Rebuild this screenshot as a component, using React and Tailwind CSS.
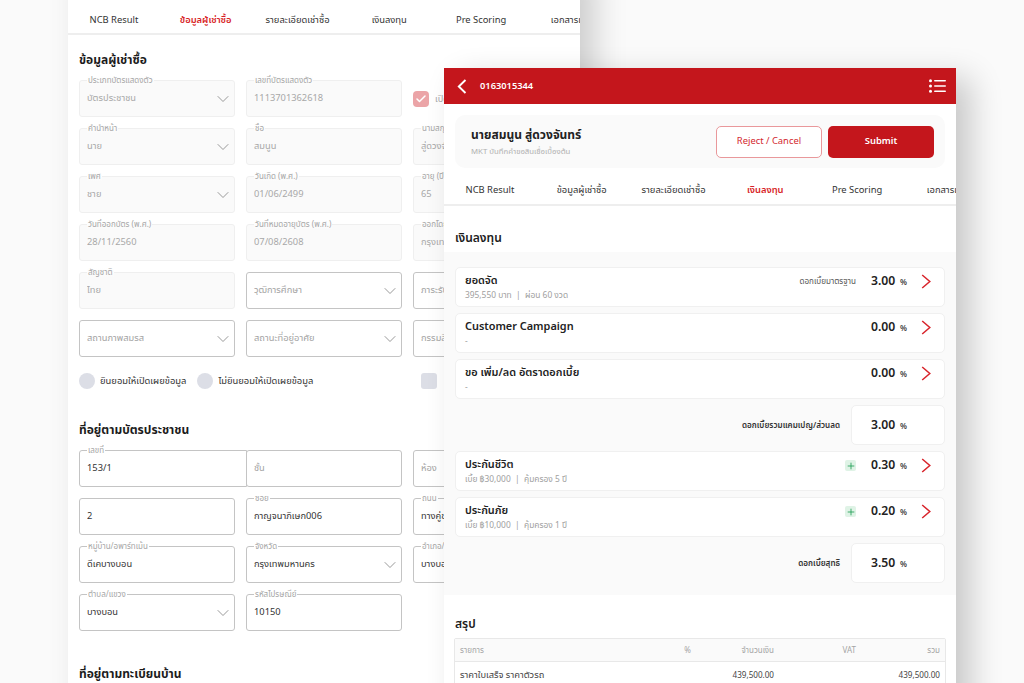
import React from "react";
import { ChevronDown, Check, Plus } from "lucide-react";

const font = { fontFamily: '"Noto Sans", "Noto Sans Thai", "Noto Sans CJK SC", sans-serif' };

const Tabs = ({ active, offset, underline, pad }) => {
  const tabs = ["NCB Result", "ข้อมูลผู้เช่าซื้อ", "รายละเอียดเช่าซื้อ", "เงินลงทุน", "Pre Scoring", "เอกสารแนบ"];
  return (
    <div className={`flex border-b-2 border-[#eeeeee] overflow-hidden ${offset}`}>
      {tabs.map((t) => (
        <div
          key={t}
          className={`w-[91.8px] shrink-0 -mb-[2px] text-center text-[9.4px] leading-[14px] whitespace-nowrap border-b-2 ${
            t === active ? `${underline} text-[#d81f28] font-semibold` : "border-transparent text-[#333]"
          } h-[35px] ${pad}`}
        >
          {t}
        </div>
      ))}
    </div>
  );
};

// form field with the label sitting on the border
const Field = ({ label, value, placeholder, select, disabled, wide }) => (
  <div
    className={`relative h-[37px] rounded-[3px] flex items-center pl-[7px] pr-[1px] ${
      disabled ? "bg-[#fafafa] border border-[#efefef]" : "bg-white border-[1.5px] border-[#c4c4c4]"
    } ${wide ? "-mr-[12px] rounded-r-none" : ""}`}
  >
    {label && (
      <span className={`absolute left-[7px] -top-[6px] px-[1px] text-[8px] leading-[10px] whitespace-nowrap text-[#a6a6a6] ${disabled ? "bg-gradient-to-b from-white to-[#fafafa]" : "bg-white"}`}>
        {label}
      </span>
    )}
    <span className={`flex-1 -mt-[1px] text-[9.3px] whitespace-nowrap overflow-hidden ${disabled ? "text-[#a8a8a8]" : value ? "text-[#333]" : "text-[#a3a3a3]"}`}>
      {value || placeholder}
    </span>
    {select && <ChevronDown size={20} strokeWidth={1.1} className="text-[#8f8f8f]" />}
  </div>
);

const Radio = ({ label }) => (
  <div className="flex items-center gap-[5px] mr-[11px]">
    <span className="w-4 h-4 rounded-full bg-[#dcdee6]" />
    <span className="text-[9.4px] text-[#333] whitespace-nowrap">{label}</span>
  </div>
);

const LeftWindow = () => (
  <div className="absolute left-[68px] top-0 w-[512px] h-[683px] bg-white overflow-hidden">
    <Tabs active="ข้อมูลผู้เช่าซื้อ" underline="border-[#e0313a]" pad="pt-[13px]" />
    <div className="pl-[11px] w-[512px]">
      <h2 className="mt-[15px] h-[20px] text-[12px] leading-[20px] font-bold text-[#1c1c1c]">ข้อมูลผู้เช่าซื้อ</h2>
      <div className="mt-[10px] grid grid-cols-[156px_156px_156px] gap-x-[11px] gap-y-[11px]">
        <Field disabled select label="ประเภทบัตรแสดงตัว" value="บัตรประชาชน" />
        <Field disabled label="เลขที่บัตรแสดงตัว" value="1113701362618" />
        <div className="flex items-center gap-[6px] h-[37px]">
          <span className="w-4 h-4 rounded-[4px] bg-[#eba4a7] flex items-center justify-center">
            <Check size={12} strokeWidth={3} className="text-white" />
          </span>
          <span className="text-[9.3px] text-[#a8a8a8]">เปิดเผยข้อมูล</span>
        </div>
        <Field disabled select label="คำนำหน้า" value="นาย" />
        <Field disabled label="ชื่อ" value="สมนูน" />
        <Field disabled label="นามสกุล" value="สู่ดวงจันทร์" />
        <Field disabled select label="เพศ" value="ชาย" />
        <Field disabled label="วันเกิด (พ.ศ.)" value="01/06/2499" />
        <Field disabled label="อายุ (ปี)" value="65" />
        <Field disabled label="วันที่ออกบัตร (พ.ศ.)" value="28/11/2560" />
        <Field disabled label="วันที่หมดอายุบัตร (พ.ศ.)" value="07/08/2608" />
        <Field disabled label="ออกโดย" value="กรุงเทพมหานคร" />
        <Field disabled label="สัญชาติ" value="ไทย" />
        <Field select placeholder="วุฒิการศึกษา" />
        <Field select placeholder="ภาระรับผิดชอบ" />
        <Field select placeholder="สถานภาพสมรส" />
        <Field select placeholder="สถานะที่อยู่อาศัย" />
        <Field select placeholder="กรรมสิทธิ์" />
      </div>
      <div className="mt-[15px] h-[18px] flex items-center">
        <Radio label="ยินยอมให้เปิดเผยข้อมูล" />
        <Radio label="ไม่ยินยอมให้เปิดเผยข้อมูล" />
        <span className="ml-[97px] w-4 h-4 rounded-[3px] bg-[#dcdee6]" />
      </div>
      <h2 className="mt-[30px] h-[20px] text-[12px] leading-[20px] font-bold text-[#1c1c1c]">ที่อยู่ตามบัตรประชาชน</h2>
      <div className="mt-[10px] grid grid-cols-[156px_156px_156px] gap-x-[11px] gap-y-[11px]">
        <Field wide label="เลขที่" value="153/1" />
        <Field placeholder="ชั้น" />
        <Field placeholder="ห้อง" />
        <Field value="2" />
        <Field label="ซอย" value="กาญจนาภิเษก006" />
        <Field label="ถนน" value="ทางคู่ขนาน" />
        <Field label="หมู่บ้าน/อพาร์ทเม้น" value="ดีเคบางบอน" />
        <Field select label="จังหวัด" value="กรุงเทพมหานคร" />
        <Field select label="อำเภอ/เขต" value="บางบอน" />
        <Field select label="ตำบล/แขวง" value="บางบอน" />
        <Field label="รหัสไปรษณีย์" value="10150" />
      </div>
      <h2 className="mt-[33px] h-[20px] text-[12px] leading-[20px] font-bold text-[#1c1c1c]">ที่อยู่ตามทะเบียนบ้าน</h2>
    </div>
  </div>
);

const Rate = ({ value }) => (
  <div className="flex items-baseline">
    <span className="text-[12.2px] font-semibold text-[#222] w-[29px]">{value}</span>
    <span className="text-[8px] font-semibold text-[#444]">%</span>
  </div>
);

const RedChevron = () => (
  <svg width="10" height="15" viewBox="0 0 10 15" fill="none" className="mt-[6px] shrink-0">
    <path d="M1.2 1 L8.8 7.5 L1.2 14" stroke="#d8232a" strokeWidth="1.5" />
  </svg>
);

const Row = ({ title, sub, note, plus, value }) => (
  <div className="h-[40px] bg-white border border-[#f0f0f0] rounded-[5px] pl-[9px] pr-[13px] flex items-start">
    <div className="flex-1 pt-[4px]">
      <div className="text-[10.9px] leading-[16px] font-semibold text-[#222]">{title}</div>
      <div className="text-[8.4px] leading-[14px] text-[#a0a0a0] whitespace-pre">{sub}</div>
    </div>
    {note && <span className="mt-[7px] mr-[15px] text-[8.1px] text-[#555]">{note}</span>}
    {plus && (
      <span className="mt-[8px] mr-[15px] w-[11px] h-[11px] rounded-[2px] bg-[#dff3e6] flex items-center justify-center">
        <Plus size={10} strokeWidth={2} className="text-[#1f9d55]" />
      </span>
    )}
    <div className="mt-[4px] w-[50px]">
      <Rate value={value} />
    </div>
    <RedChevron />
  </div>
);

const Total = ({ label, value }) => (
  <div className="h-[40px] flex items-center justify-end">
    <span className="text-[8.1px] font-semibold text-[#333] mr-[11px]">{label}</span>
    <div className="w-[94px] h-[40px] bg-white border border-[#f0f0f0] rounded-[5px] flex items-center pl-[19px]">
      <Rate value={value} />
    </div>
  </div>
);

const MenuIcon = () => (
  <svg width="17" height="14" viewBox="0 0 17 14" className="text-white">
    <g fill="currentColor">
      <circle cx="1.5" cy="1.7" r="1.5" />
      <circle cx="1.5" cy="7" r="1.5" />
      <circle cx="1.5" cy="12.3" r="1.5" />
      <rect x="5" y="0.9" width="12" height="1.6" rx="0.8" />
      <rect x="5" y="6.2" width="12" height="1.6" rx="0.8" />
      <rect x="5" y="11.5" width="12" height="1.6" rx="0.8" />
    </g>
  </svg>
);

const RightWindow = () => (
  <div className="absolute left-[444px] top-[68px] w-[512px] h-[615px] bg-white overflow-hidden">
    <div className="h-[36px] bg-[#c4161c] flex items-center pl-[13px] pr-[10px] text-white">
      <svg width="10" height="15" viewBox="0 0 10 15" fill="none">
        <path d="M8.5 1 L1.8 7.5 L8.5 14" stroke="white" strokeWidth="1.9" />
      </svg>
      <span className="ml-[13px] flex-1 text-[9.3px] font-semibold">0163015344</span>
      <MenuIcon />
    </div>
    <div className="mt-[11px] mx-[11px] h-[53px] bg-[#fafafa] rounded-[10px] flex items-center pl-[16px] pr-[11px]">
      <div className="flex-1">
        <div className="text-[12px] leading-[18px] font-bold text-[#222]">นายสมนูน สู่ดวงจันทร์</div>
        <div className="text-[7.8px] leading-[12px] mt-[1px] text-[#b0b0b0]">MKT บันทึกคำขอสินเชื่อเบื้องต้น</div>
      </div>
      <button className="w-[106px] h-[32px] rounded-[5px] bg-white border border-[#e9989b] text-[9.4px] text-[#d3272e]">Reject / Cancel</button>
      <button className="ml-[6px] w-[106px] h-[32px] rounded-[5px] bg-[#c4161c] text-[9.4px] font-semibold text-white">Submit</button>
    </div>
    <Tabs active="เงินลงทุน" offset="mt-[3px]" underline="border-[#d9626a]" pad="pt-[12px]" />
    <h2 className="mt-[22px] px-[11px] text-[12px] leading-[20px] font-semibold text-[#1c1c1c]">เงินลงทุน</h2>
    <div className="mt-[4px] h-[343px] bg-[#fafafa] px-[11px] pt-[15px] flex flex-col gap-[6px]">
      <Row title="ยอดจัด" sub="395,550 บาท  |  ผ่อน 60 งวด" note="ดอกเบี้ยมาตรฐาน" value="3.00" />
      <Row title="Customer Campaign" sub="-" value="0.00" />
      <Row title="ขอ เพิ่ม/ลด อัตราดอกเบี้ย" sub="-" value="0.00" />
      <Total label="ดอกเบี้ยรวมแคมเปญ/ส่วนลด" value="3.00" />
      <Row title="ประกันชีวิต" sub="เบี้ย ฿30,000  |  คุ้มครอง 5 ปี" plus value="0.30" />
      <Row title="ประกันภัย" sub="เบี้ย ฿10,000  |  คุ้มครอง 1 ปี" plus value="0.20" />
      <Total label="ดอกเบี้ยสุทธิ" value="3.50" />
    </div>
    <h2 className="mt-[19px] px-[11px] text-[12px] leading-[20px] font-semibold text-[#1c1c1c]">สรุป</h2>
    <div className="mt-[4px] mx-[10px] border border-[#e8e8e8] rounded-[2px]">
      <div className="h-[23px] bg-[#fafafa] border-b border-[#e8e8e8] grid grid-cols-[201px_30px_83px_82px_1fr] items-center px-[5px] text-[8px] text-[#a5a5a5]">
        <span>รายการ</span>
        <span className="text-right">%</span>
        <span className="text-right">จำนวนเงิน</span>
        <span className="text-right">VAT</span>
        <span className="text-right">รวม</span>
      </div>
      <div className="h-[26px] grid grid-cols-[201px_30px_83px_82px_1fr] items-center px-[5px] text-[8.1px] text-[#444]">
        <span className="text-[9.3px] whitespace-nowrap">ราคาใบเสร็จ ราคาตัวรถ</span>
        <span />
        <span className="text-right">439,500.00</span>
        <span />
        <span className="text-right">439,500.00</span>
      </div>
    </div>
  </div>
);

export default function App() {
  return (
    <div className="relative w-[1024px] h-[683px] bg-[#fafafa] overflow-hidden" style={font}>
      {/* both window shadows fall to the right and down, none on the left edge */}
      <div className="absolute left-[68px] -top-[40px] w-[512px] h-[760px] shadow-[15px_10px_30px_rgba(0,0,0,0.18)]" />
      <LeftWindow />
      <div className="absolute left-[444px] top-[68px] w-[512px] h-[640px] shadow-[15px_10px_30px_rgba(0,0,0,0.2)]" />
      <RightWindow />
    </div>
  );
}
